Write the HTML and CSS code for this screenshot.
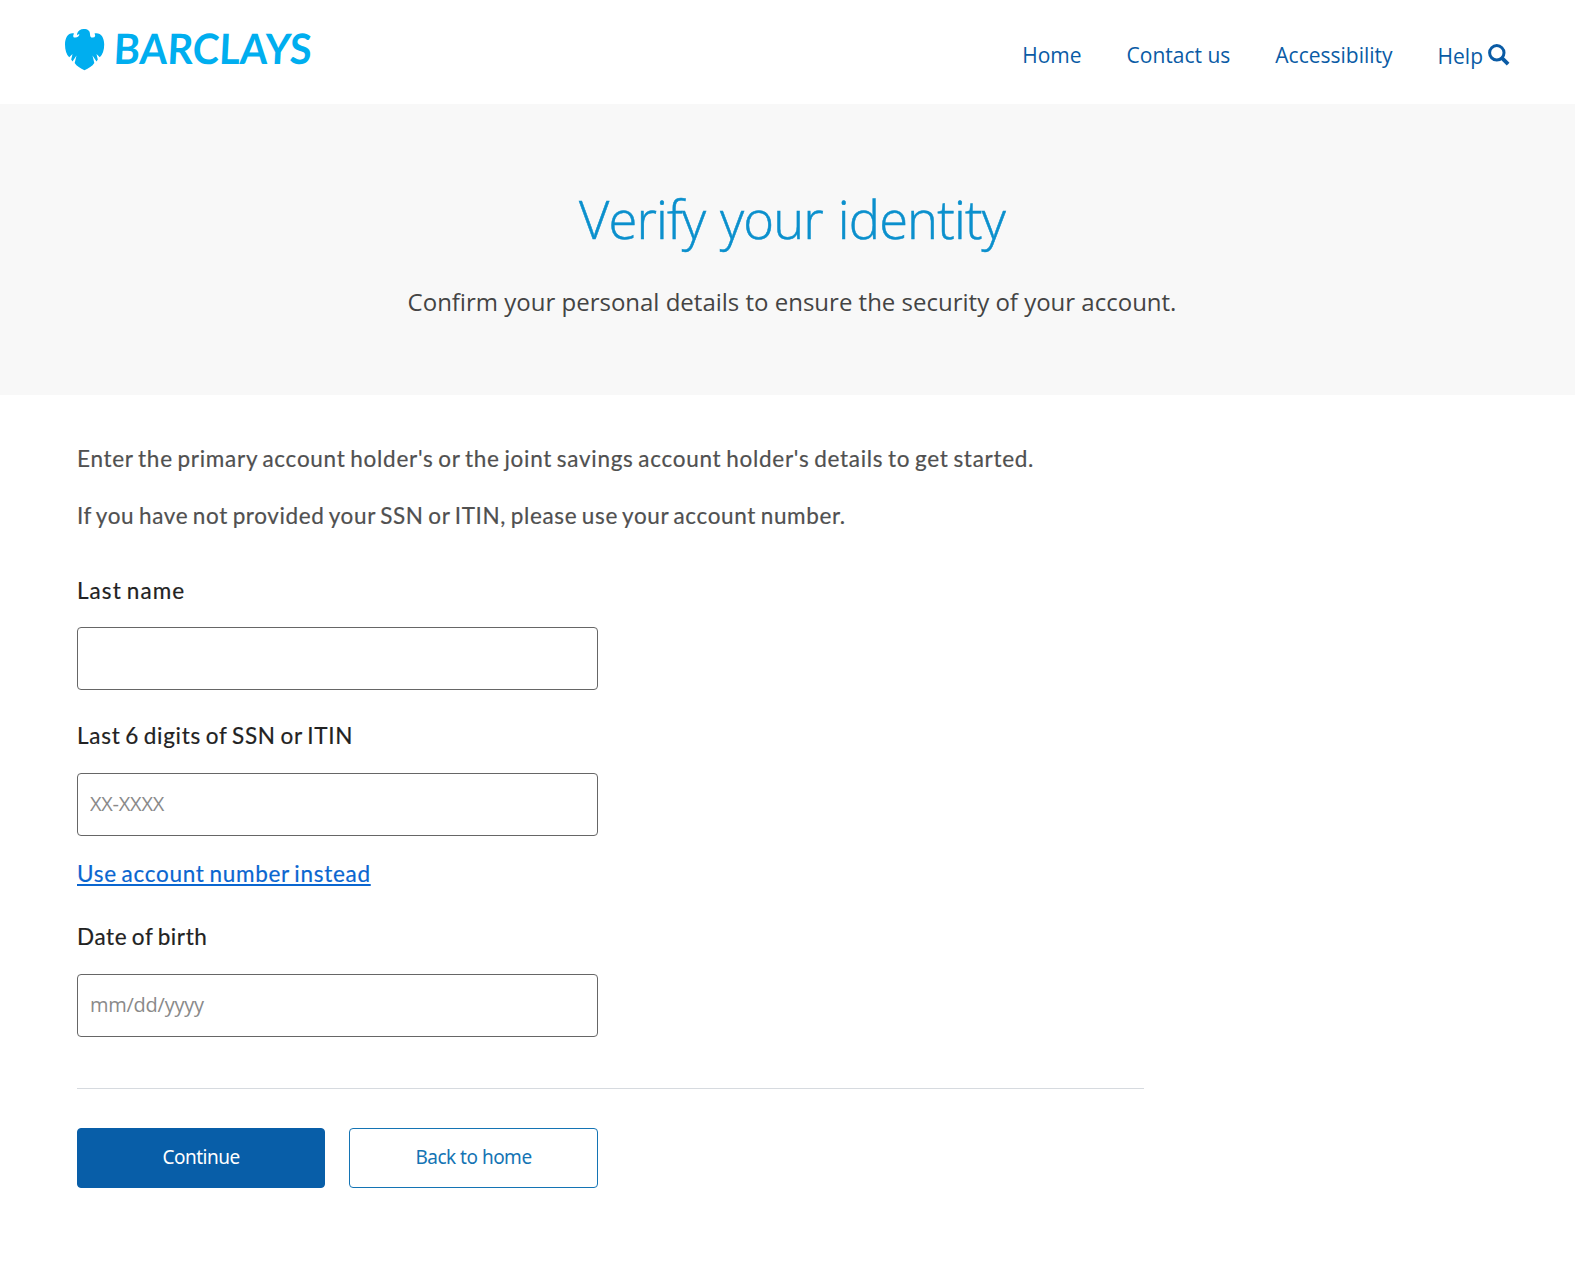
FILE: index.html
```
<!DOCTYPE html>
<html lang="en">
<head>
    <meta charset="UTF-8">
    <meta name="viewport" content="width=device-width, initial-scale=1.0">
    <title>Verify your identity</title>
    <link rel="stylesheet" href="styles.css">
</head>
<body>
    <header class="header">
        <a class="logo" href="#">
            <svg width="260" height="60" viewBox="0 0 260 60" xmlns="http://www.w3.org/2000/svg">
                <path d="M12 8C13 4.800 15.500 3 18.800 3c4.200 0 6.200 2 6.200 5 0 2.500.8 3.800 2.800 3.600 2.500-.2 3-2 1.700-4.200 6-1.200 9.700 3.600 9.700 11.100 0 5.500-1.600 10-4.400 12.800L31.500 28l1.300 5.500-1.300 2-4-6 1.800 7.500c-1.800 3-5.800 5.500-9.800 7.200-4-1.700-8-4.200-9.800-7.200l1.800-7.500-4 6-1.300-2L7.500 28l-3.300 3.300C1.500 28.500 0 24 0 18.500 0 11 3.700 6.200 9 7.400c-1.500 2.500-.8 4.400 1.400 4.200 2.400-.2 3.800-1.700 4-3.200-.9-.2-1.600 0-2.400.8z" fill="#00aeef"/>
                <text class="logo-text" transform="translate(48 38.200) skewX(-3)" textLength="198" lengthAdjust="spacingAndGlyphs">BARCLAYS</text>
            </svg>
        </a>
        <nav class="nav">
            <a class="nav-home" href="#">Home</a>
            <a class="nav-contact" href="#">Contact us</a>
            <a class="nav-access" href="#">Accessibility</a>
            <a class="nav-help" href="#">
                <span>Help</span>
                <svg width="22" height="22" viewBox="0 0 22 22" fill="none" stroke="#0a5ba5" xmlns="http://www.w3.org/2000/svg">
                    <circle cx="8.800" cy="8.800" r="7.200" stroke-width="3"/>
                    <path d="M13.800 13.800l6.300 6.300" stroke-width="3.800"/>
                </svg>
            </a>
        </nav>
    </header>
    <section class="hero">
        <h1>Verify your identity</h1>
        <p>Confirm your personal details to ensure the security of your account.</p>
    </section>
    <main class="content">
        <p class="intro intro-holder">Enter the primary account holder's or the joint savings account holder's details to get started.</p>
        <p class="intro intro-ssn">If you have not provided your SSN or ITIN, please use your account number.</p>
        <form>
            <div class="field">
                <label class="label-name" for="last-name">Last name</label>
                <input class="input-name" type="text" id="last-name">
            </div>
            <div class="field">
                <label class="label-ssn" for="ssn">Last 6 digits of SSN or ITIN</label>
                <input class="input-ssn" type="text" id="ssn" placeholder="XX-XXXX">
            </div>
            <a class="switch-link" href="#">Use account number instead</a>
            <div class="field">
                <label class="label-dob" for="dob">Date of birth</label>
                <input class="input-dob" type="text" id="dob" placeholder="mm/dd/yyyy">
            </div>
            <hr>
            <div class="buttons">
                <button type="button" class="btn btn-primary">Continue</button>
                <button type="button" class="btn btn-secondary">Back to home</button>
            </div>
        </form>
    </main>
</body>
</html>
```
FILE: styles.css
```
* {
    box-sizing: border-box;
}
body {
    margin: 0;
    background: #fff;
    font-family: "Open Sans", sans-serif;
    color: #222;
}
.header {
    display: flex;
    justify-content: space-between;
    height: 104px;
    padding: 26px 65px 0;
}
.logo svg {
    display: block;
    overflow: visible;
}
.logo-text {
    font-family: Lato, sans-serif;
    font-size: 42px;
    font-weight: 700;
    fill: #00aeef;
}
.nav {
    display: flex;
    gap: 45px;
    padding-top: 14px;
    height: 46px;
}
.nav a {
    color: #0a5ba5;
    font-size: 21px;
    line-height: 30px;
    text-decoration: none;
    white-space: nowrap;
}
.nav .nav-help {
    display: flex;
    gap: 5px;
}
.nav-help span {
    padding-top: 1px;
}
.nav-help svg {
    margin-top: 4px;
}
.hero {
    height: 291px;
    padding: 75px 0 0 9px;
    background: #f8f8f8;
    text-align: center;
}
.hero h1 {
    margin: 0;
    color: #0b90cd;
    font-size: 52.5px;
    font-weight: 300;
    line-height: 80px;
    letter-spacing: -0.85px;
    word-spacing: 2px;
    -webkit-text-stroke: 0.5px #0b90cd;
}
.hero p {
    margin: 25px 0 0;
    color: #444;
    font-size: 24px;
    line-height: 36px;
}
.content {
    width: 1144px;
    padding: 49px 0 0 77px;
}
.intro,
.field label,
.switch-link {
    font-family: Lato, sans-serif;
    font-size: 22.5px;
    font-weight: 400;
    line-height: 30px;
    letter-spacing: 0.72px;
    word-spacing: -1.7px;
    white-space: nowrap;
    -webkit-text-stroke: 0.2px;
}
.intro {
    margin: 0 0 27px;
    color: #505050;
}
.intro-ssn {
    margin-bottom: 45px;
    letter-spacing: 0.63px;
}
.field {
    display: flex;
    flex-direction: column;
    width: 521px;
}
.field label {
    margin-bottom: 22px;
    color: #222;
}
.field .label-name {
    margin-bottom: 21px;
    letter-spacing: 1.05px;
}
.field .label-dob {
    letter-spacing: 0.6px;
}
.field input {
    height: 63px;
    padding: 0 11px 2px 12px;
    border: 1px solid #666;
    border-radius: 4px;
    background: #fff;
    font-family: "Open Sans", sans-serif;
    font-size: 20px;
    letter-spacing: -0.25px;
}
.field input::placeholder {
    color: #8a8a8a;
}
.field .input-name {
    margin-bottom: 31px;
}
.field .input-ssn {
    margin-bottom: 23px;
}
.field .input-dob {
    margin-bottom: 51px;
}
.switch-link {
    display: table;
    margin-bottom: 33px;
    color: #0a66d0;
    text-decoration: underline;
    text-decoration-thickness: 2px;
    text-underline-offset: 2px;
    text-decoration-skip-ink: none;
}
hr {
    height: 1px;
    margin: 0 0 39px;
    border: 0;
    background: #d6dadf;
}
.buttons {
    display: flex;
    gap: 24px;
    width: 521px;
}
.btn {
    width: 249px;
    height: 60px;
    padding: 0 0 2px;
    border: 1px solid #085ea8;
    border-radius: 4px;
    font-family: "Noto Sans", sans-serif;
    font-size: 19px;
    letter-spacing: -0.5px;
}
.btn-primary {
    width: 248px;
    background: #085ea8;
    color: #fff;
}
.btn-secondary {
    background: #fff;
    border-color: #1474b4;
    color: #1474b4;
}
```
